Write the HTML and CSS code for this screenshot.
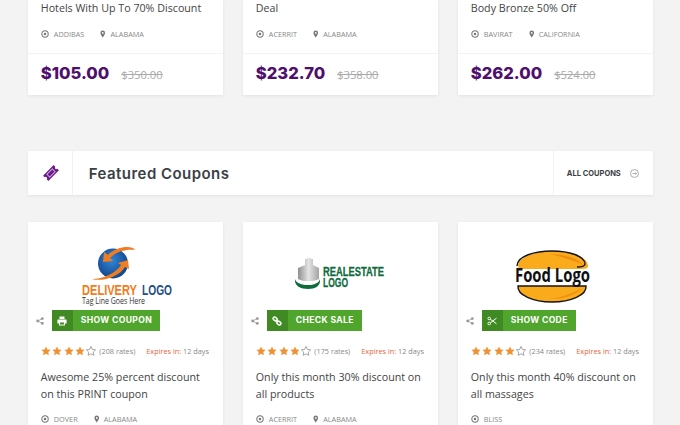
FILE: index.html
```html
<!DOCTYPE html>
<html lang="en">
<head>
    <meta charset="UTF-8">
    <meta name="viewport" content="width=device-width, initial-scale=1.0">
    <title>Featured Coupons</title>
    <link rel="stylesheet" href="styles.css">
</head>
<body>
    <svg class="icon-defs" width="0" height="0">
        <symbol id="i-target" viewBox="0 0 10 10">
            <circle cx="5" cy="5" r="4" fill="none" stroke="currentColor" stroke-width="1.300"/>
            <circle cx="5" cy="5" r="1.600" fill="currentColor"/>
        </symbol>
        <symbol id="i-marker" viewBox="0 0 8 10">
            <path fill="currentColor" fill-rule="evenodd" d="M4 0a3.400 3.400 0 0 1 3.400 3.400C7.400 5.500 4 10 4 10S.6 5.500.6 3.400A3.400 3.400 0 0 1 4 0zm0 2.100a1.300 1.300 0 1 0 0 2.600 1.300 1.300 0 0 0 0-2.600z"/>
        </symbol>
        <symbol id="i-share" viewBox="0 0 10 10">
            <path d="M7.800 2 2.200 5l5.600 3" fill="none" stroke="currentColor" stroke-width="1"/>
            <circle cx="7.900" cy="2" r="1.800" fill="currentColor"/>
            <circle cx="2.100" cy="5" r="1.800" fill="currentColor"/>
            <circle cx="7.900" cy="8" r="1.800" fill="currentColor"/>
        </symbol>
        <symbol id="i-star" viewBox="0 0 20 20">
            <path d="M10 1l2.800 5.800 6.400.9-4.600 4.500 1.100 6.400L10 15.600l-5.700 3 1.100-6.400L.8 7.700l6.400-.9z"/>
        </symbol>
    </svg>

    <main class="page">
        <section class="card-grid">
            <article class="card">
                <h3 class="card-title">Hotels With Up To 70% Discount</h3>
                <div class="meta">
                    <span class="meta-item"><svg class="meta-icon"><use href="#i-target"/></svg>Addibas</span>
                    <span class="meta-item"><svg class="meta-icon meta-pin"><use href="#i-marker"/></svg>Alabama</span>
                </div>
                <div class="price-row">
                    <span class="price">$105.00</span>
                    <del class="old-price">$350.00</del>
                </div>
            </article>
            <article class="card">
                <h3 class="card-title">Deal</h3>
                <div class="meta">
                    <span class="meta-item"><svg class="meta-icon"><use href="#i-target"/></svg>Acerrit</span>
                    <span class="meta-item"><svg class="meta-icon meta-pin"><use href="#i-marker"/></svg>Alabama</span>
                </div>
                <div class="price-row">
                    <span class="price">$232.70</span>
                    <del class="old-price">$358.00</del>
                </div>
            </article>
            <article class="card">
                <h3 class="card-title">Body Bronze 50% Off</h3>
                <div class="meta">
                    <span class="meta-item"><svg class="meta-icon"><use href="#i-target"/></svg>Bavirat</span>
                    <span class="meta-item"><svg class="meta-icon meta-pin"><use href="#i-marker"/></svg>California</span>
                </div>
                <div class="price-row">
                    <span class="price">$262.00</span>
                    <del class="old-price">$524.00</del>
                </div>
            </article>
        </section>

        <header class="section-bar">
            <div class="section-icon">
                <svg width="16" height="16" viewBox="0 0 15 15">
                    <g transform="rotate(-45 7.500 7.500)" fill="#6a1b8a">
                        <path d="M.5 4h14v2.200a1.300 1.300 0 0 0 0 2.600V11H.5V8.800a1.300 1.300 0 0 0 0-2.600z"/>
                        <rect x="3.500" y="5.300" width="8" height="4.400" fill="#d9b8e6"/>
                        <rect x="4.300" y="6.100" width="6.400" height="2.800" fill="#6a1b8a"/>
                    </g>
                </svg>
            </div>
            <h2 class="section-title">Featured Coupons</h2>
            <a class="section-link">All Coupons
                <svg width="9" height="9" viewBox="0 0 10 10">
                    <circle cx="5" cy="5" r="4.400" fill="none" stroke="#999" stroke-width=".9"/>
                    <path d="M2.800 5h4.400M5.800 3.700 7.200 5 5.800 6.300" fill="none" stroke="#999" stroke-width=".8"/>
                </svg>
            </a>
        </header>

        <section class="card-grid">
            <article class="card">
                <svg class="logo" viewBox="0 0 195 88">
                    <defs>
                        <radialGradient id="globe" cx="45%" cy="40%" r="65%">
                            <stop offset="0" stop-color="#2f86d6"/>
                            <stop offset="1" stop-color="#123f86"/>
                        </radialGradient>
                    </defs>
                    <circle cx="85" cy="41.500" r="15" fill="url(#globe)"/>
                    <path d="M64 57c10 3 27-2 33-12l4 2-1-9-10 3 3 2c-5 8-18 14-29 14z" fill="#ef7d22"/>
                    <path d="M107 28c-2-5-19-4-27 5l-4-3-1 10 10-1-3-3c6-6 15-9 25-8z" fill="#ef7d22"/>
                    <text class="logo-delivery" x="54" y="73" textLength="55" lengthAdjust="spacingAndGlyphs">DELIVERY</text>
                    <text class="logo-delivery-blue" x="114" y="73" textLength="30" lengthAdjust="spacingAndGlyphs">LOGO</text>
                    <text class="logo-tag" x="54" y="82" textLength="63" lengthAdjust="spacingAndGlyphs">Tag Line Goes Here</text>
                </svg>
                <div class="action">
                    <svg class="share-icon"><use href="#i-share"/></svg>
                    <a class="coupon-btn">
                        <span class="coupon-btn-icon">
                            <svg width="10" height="10" viewBox="0 0 10 10">
                                <path fill="#fff" fill-rule="evenodd" d="M2.500.5h5v2.500h-5zM1 3.500h8a.6.600 0 0 1 .6.600v3.400H8V9.500H2V7.500H.4V4.100A.6.600 0 0 1 1 3.500zM3 6.500v2h4v-2z"/>
                            </svg>
                        </span>
                        <span class="coupon-btn-label">Show Coupon</span>
                    </a>
                </div>
                <div class="rating-row">
                    <span class="stars">
                        <svg class="star"><use href="#i-star"/></svg>
                        <svg class="star"><use href="#i-star"/></svg>
                        <svg class="star"><use href="#i-star"/></svg>
                        <svg class="star"><use href="#i-star"/></svg>
                        <svg class="star star-empty"><use href="#i-star"/></svg>
                    </span>
                    <span class="rates">(208 rates)</span>
                    <span class="expires"><em>Expires in:</em> 12 days</span>
                </div>
                <h3 class="card-title card-title-long">Awesome 25% percent discount on this PRINT coupon</h3>
                <div class="meta meta-last">
                    <span class="meta-item"><svg class="meta-icon"><use href="#i-target"/></svg>Dover</span>
                    <span class="meta-item"><svg class="meta-icon meta-pin"><use href="#i-marker"/></svg>Alabama</span>
                </div>
            </article>

            <article class="card">
                <svg class="logo" viewBox="0 0 195 88">
                    <defs>
                        <linearGradient id="tower" x1="0" x2="1" y1="0" y2="0">
                            <stop offset="0" stop-color="#8f8f8f"/>
                            <stop offset=".5" stop-color="#e4e4e4"/>
                            <stop offset="1" stop-color="#a3a3a3"/>
                        </linearGradient>
                    </defs>
                    <path d="M55 46l7-3V37h2v-1h4v1h2v6l6 3v11c-6 3-15 3-21 0z" fill="url(#tower)"/>
                    <path d="M52 57c1 4 7 6 13 6s11-2 12-6c1 7-5 10-12 10s-14-3-13-10z" fill="#0f6b3c"/>
                    <text class="logo-estate" x="80" y="54" textLength="61" lengthAdjust="spacingAndGlyphs">REALESTATE</text>
                    <text class="logo-estate" x="80" y="65" textLength="25" lengthAdjust="spacingAndGlyphs">LOGO</text>
                </svg>
                <div class="action">
                    <svg class="share-icon"><use href="#i-share"/></svg>
                    <a class="coupon-btn">
                        <span class="coupon-btn-icon">
                            <svg width="10" height="10" viewBox="0 0 10 10">
                                <g fill="none" stroke="#fff" stroke-width="1.400">
                                    <rect x=".9" y="1.400" width="4.400" height="3" rx="1.400" transform="rotate(40 3 3)"/>
                                    <rect x="4.700" y="5.600" width="4.400" height="3" rx="1.400" transform="rotate(40 7 7)"/>
                                    <path d="M3.800 3.800 6.200 6.200"/>
                                </g>
                            </svg>
                        </span>
                        <span class="coupon-btn-label">Check Sale</span>
                    </a>
                </div>
                <div class="rating-row">
                    <span class="stars">
                        <svg class="star"><use href="#i-star"/></svg>
                        <svg class="star"><use href="#i-star"/></svg>
                        <svg class="star"><use href="#i-star"/></svg>
                        <svg class="star"><use href="#i-star"/></svg>
                        <svg class="star star-empty"><use href="#i-star"/></svg>
                    </span>
                    <span class="rates">(175 rates)</span>
                    <span class="expires"><em>Expires in:</em> 12 days</span>
                </div>
                <h3 class="card-title card-title-long">Only this month 30% discount on all products</h3>
                <div class="meta meta-last">
                    <span class="meta-item"><svg class="meta-icon"><use href="#i-target"/></svg>Acerrit</span>
                    <span class="meta-item"><svg class="meta-icon meta-pin"><use href="#i-marker"/></svg>Alabama</span>
                </div>
            </article>

            <article class="card">
                <svg class="logo" viewBox="0 0 195 88">
                    <path d="M60 44c0-9 18-15 35-15s35 6 35 15c0 3-4 3-9 3H69c-5 0-9 0-9-3z" fill="#f9ab1c"/>
                    <path d="M59 44c0-10 18-15 35-15s33 5 33 13c0 2-3 3-8 3" fill="none" stroke="#151515" stroke-width="1.400"/>
                    <path d="M92 32c14 0 28 4 33 11-8-4-20-8-33-11z" fill="#ef8f10"/>
                    <path d="M60 64h68c1 9-15 16-34 16s-35-7-34-16z" fill="#f9ab1c" stroke="#151515" stroke-width="1.400"/>
                    <path d="M92 77c14 0 26-4 32-11-8 5-20 9-32 11z" fill="#ef8f10"/>
                    <text class="logo-food" x="57" y="60" textLength="75" lengthAdjust="spacingAndGlyphs">Food Logo</text>
                </svg>
                <div class="action">
                    <svg class="share-icon"><use href="#i-share"/></svg>
                    <a class="coupon-btn">
                        <span class="coupon-btn-icon">
                            <svg width="10" height="10" viewBox="0 0 10 10">
                                <circle cx="2.200" cy="2.500" r="1.300" fill="none" stroke="#fff" stroke-width=".9"/>
                                <circle cx="2.200" cy="7.500" r="1.300" fill="none" stroke="#fff" stroke-width=".9"/>
                                <path d="M3.300 3.200 9.500 7.800M3.300 6.800 9.500 2.200" stroke="#fff" stroke-width="1"/>
                            </svg>
                        </span>
                        <span class="coupon-btn-label">Show Code</span>
                    </a>
                </div>
                <div class="rating-row">
                    <span class="stars">
                        <svg class="star"><use href="#i-star"/></svg>
                        <svg class="star"><use href="#i-star"/></svg>
                        <svg class="star"><use href="#i-star"/></svg>
                        <svg class="star"><use href="#i-star"/></svg>
                        <svg class="star star-empty"><use href="#i-star"/></svg>
                    </span>
                    <span class="rates">(234 rates)</span>
                    <span class="expires"><em>Expires in:</em> 12 days</span>
                </div>
                <h3 class="card-title card-title-long">Only this month 40% discount on all massages</h3>
                <div class="meta meta-last">
                    <span class="meta-item"><svg class="meta-icon"><use href="#i-target"/></svg>Bliss</span>
                </div>
            </article>
        </section>
    </main>
</body>
</html>
```

FILE: styles.css
```css
/* Page */
html, body {
    height: 425px;
    overflow: hidden;
}

body {
    margin: 0;
    background-color: #f3f3f3;
    font-family: "Open Sans", sans-serif;
    color: #444;
}

.icon-defs {
    position: absolute;
}

.page {
    width: 625px;
    margin-left: 27.8px;
}

/* Cards */
.card-grid {
    display: grid;
    grid-template-columns: repeat(3, 195.2px);
    gap: 19.8px;
}

.card {
    background-color: #fff;
    box-shadow: 0 1px 3px rgba(0, 0, 0, 0.07);
}

.card-title {
    margin: 0;
    padding: 0 13px;
    font-size: 10.7px;
    font-weight: 400;
    line-height: 17px;
    color: #444;
}

.card-title-long {
    margin-top: 11px;
}

/* Store and location line */
.meta {
    display: flex;
    gap: 16px;
    height: 14px;
    margin-top: 10px;
    padding: 0 13px 12px;
    font-size: 7.3px;
    line-height: 14px;
    text-transform: uppercase;
    color: #888;
}

.meta-last {
    margin-top: 9px;
}

.meta-item {
    display: flex;
    align-items: center;
}

.meta-icon {
    width: 8px;
    height: 8px;
    margin-right: 5px;
    color: #777;
}

.meta-pin {
    width: 5.5px;
    margin-right: 4.5px;
}

/* Price */
.price-row {
    display: flex;
    align-items: baseline;
    gap: 12px;
    height: 41px;
    padding: 0 13px;
    border-top: 1px solid #f3f3f3;
    line-height: 38px;
}

.price {
    font-family: Inter, sans-serif;
    font-size: 16.6px;
    font-weight: 800;
    color: #4f0f6e;
}

.old-price {
    font-size: 11.2px;
    color: #aaa;
}

/* Section heading */
.section-bar {
    display: flex;
    align-items: stretch;
    height: 44px;
    margin: 56px 0 27px;
    background-color: #fff;
    box-shadow: 0 1px 3px rgba(0, 0, 0, 0.07);
}

.section-icon {
    display: flex;
    align-items: center;
    justify-content: center;
    box-sizing: border-box;
    width: 45px;
    padding-left: 3px;
    border-right: 1px solid #f1f1f1;
}

.section-title {
    flex: 1;
    margin: 0;
    padding-left: 16px;
    font-family: Inter, sans-serif;
    font-size: 15px;
    font-weight: 600;
    line-height: 46px;
    letter-spacing: 0.45px;
    color: #3b3f45;
}

.section-link {
    display: flex;
    align-items: center;
    gap: 9px;
    padding: 0 14px 0 13px;
    border-left: 1px solid #f1f1f1;
    font-family: Inter, sans-serif;
    font-size: 7.5px;
    font-weight: 700;
    text-transform: uppercase;
    color: #3b3f45;
}

/* Logo and button */
.logo {
    display: block;
    width: 195px;
    height: 88px;
}

.logo-delivery, .logo-delivery-blue {
    font-family: "Liberation Sans", sans-serif;
    font-size: 15px;
    font-weight: 700;
}

.logo-delivery {
    fill: #ef7d22;
}

.logo-delivery-blue {
    fill: #1f4f85;
}

.logo-tag {
    font-family: "Open Sans", sans-serif;
    font-size: 9px;
    fill: #333;
}

.logo-estate {
    font-family: "Liberation Sans", sans-serif;
    font-size: 13.5px;
    font-weight: 700;
    fill: #0f6b3c;
    stroke: #0f6b3c;
    stroke-width: 0.3px;
}

.logo-food {
    font-family: "Open Sans", sans-serif;
    font-size: 19px;
    font-weight: 700;
    fill: #111;
}

.action {
    display: flex;
    align-items: center;
    gap: 8px;
    padding-left: 8px;
}

.share-icon {
    width: 8px;
    height: 8px;
    color: #999;
}

.coupon-btn {
    display: flex;
    height: 21px;
    background-color: #50a52d;
    color: #fff;
}

.coupon-btn-icon {
    display: flex;
    align-items: center;
    justify-content: center;
    width: 21px;
    background-color: #3f8a22;
}

.coupon-btn-label {
    padding: 0 8px;
    font-family: Inter, sans-serif;
    font-size: 8.6px;
    font-weight: 700;
    line-height: 21px;
    letter-spacing: 0.35px;
    text-transform: uppercase;
}

/* Rating */
.rating-row {
    display: flex;
    align-items: center;
    height: 14px;
    margin-top: 13px;
    padding: 0 14px 0 13px;
    font-size: 7.3px;
    color: #888;
}

.stars {
    display: flex;
    gap: 1.4px;
}

.star {
    width: 10px;
    height: 10px;
    fill: #ef9233;
}

.star-empty {
    fill: none;
    stroke: #888;
    stroke-width: 1.500;
}

.rates {
    margin-left: 3px;
}

.expires {
    margin-left: auto;
}

.expires em {
    font-style: normal;
    color: #e8643c;
}
```
